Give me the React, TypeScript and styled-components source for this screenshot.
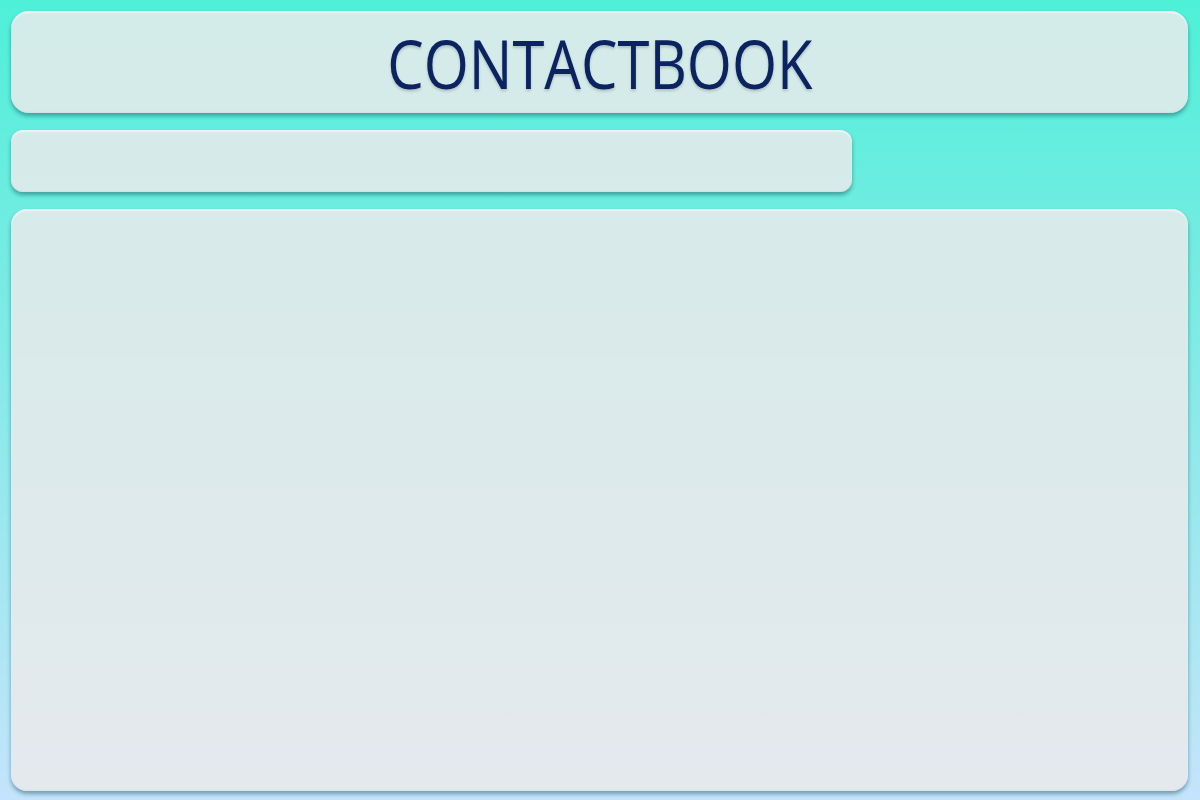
import React from "react";
import styled, { createGlobalStyle } from "styled-components";

const Global = createGlobalStyle`
  html, body { margin: 0; padding: 0; height: 100%; }
  body {
    font-family: "Open Sans", "Noto Sans", sans-serif;
    background: linear-gradient(to bottom, #4ef0d8 0%, #70ece1 28%, #c4e4fc 100%);
    background-attachment: fixed;
  }
  #root { height: 100%; }
`;

const Page = styled.div`
  box-sizing: border-box;
  height: 800px;
  padding: 11px 12px 9px 11px;
  display: flex;
  flex-direction: column;
  gap: 17px;
`;

const Card = styled.div<{ $radius: number }>`
  box-sizing: border-box;
  background: rgba(234, 234, 235, 0.85);
  border-radius: ${(p) => p.$radius}px;
  box-shadow: 0 3px 4px rgba(0, 60, 70, 0.42),
    inset 0 2px 2px rgba(255, 255, 255, 0.55),
    inset 0 -1px 2px rgba(0, 0, 0, 0.04);
`;

const Header = styled(Card)`
  height: 102px;
  display: flex;
  align-items: center;
  justify-content: center;
`;

const Title = styled.h1`
  margin: 0;
  font-family: "Open Sans", "Noto Sans", sans-serif;
  font-weight: 400;
  font-size: 67px;
  line-height: 1;
  color: #0b2461;
  text-shadow: 0 2px 3px rgba(0, 0, 0, 0.18);
  transform: scaleX(0.865);
  padding-top: 2px;
`;

const SearchBar = styled(Card)`
  width: 841px;
  height: 62px;
`;

const ListPanel = styled(Card)`
  flex: 1;
`;

export default function App() {
  return (
    <>
      <Global />
      <Page>
        <Header $radius={18}>
          <Title>CONTACTBOOK</Title>
        </Header>
        <SearchBar $radius={12} />
        <ListPanel $radius={16} />
      </Page>
    </>
  );
}
